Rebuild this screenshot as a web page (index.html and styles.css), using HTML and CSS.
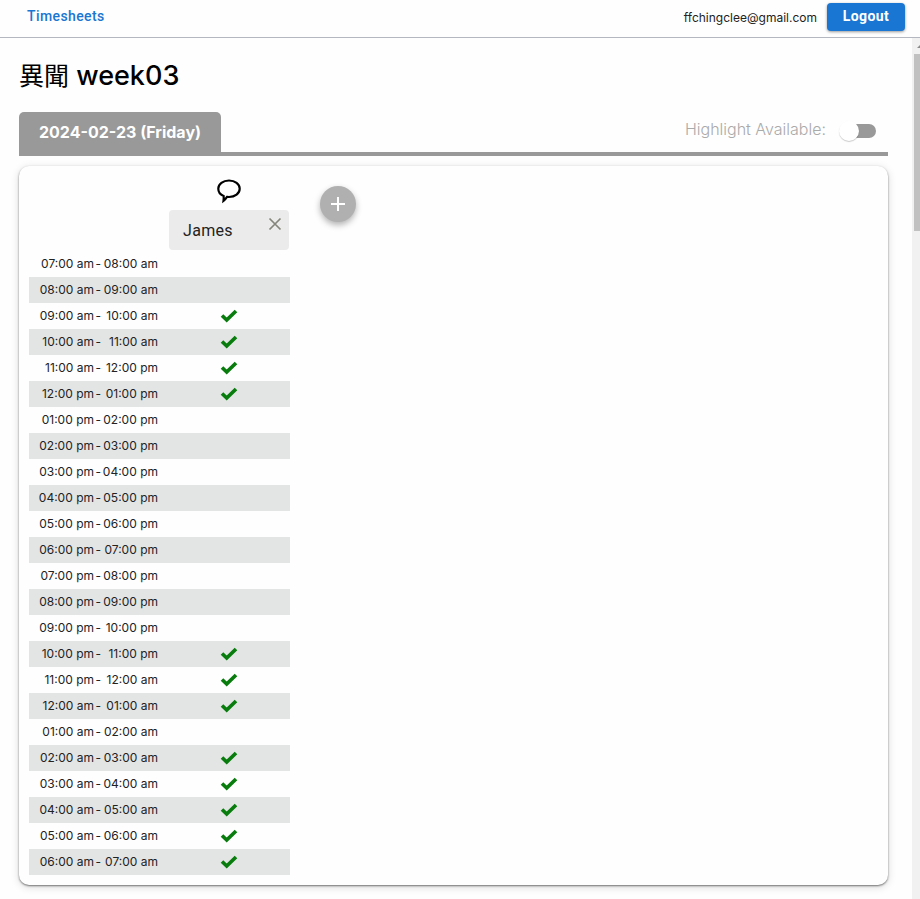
FILE: index.html
```html
<!DOCTYPE html>
<html lang="en">
<head>
<meta charset="utf-8">
<meta name="viewport" content="width=device-width, initial-scale=1">
<title>Timesheets</title>
<link rel="stylesheet" href="styles.css">
</head>
<body>
<svg class="sprite" aria-hidden="true">
  <symbol id="check" viewBox="0 0 18 14"><path d="M2 6.500 6.700 11 16 2" fill="none" stroke="currentColor" stroke-width="3.700"/></symbol>
</svg>
<header class="topbar">
  <nav><a class="nav-link" href="#">Timesheets</a></nav>
  <div class="account">
    <span class="email">ffchingclee@gmail.com</span>
    <button class="logout" type="button">Logout</button>
  </div>
</header>
<div class="viewport">
  <main class="content">
    <h1 class="title"><span class="title-zh" lang="zh-Hant">異聞</span> week03</h1>
    <div class="tabs">
      <button class="tab" type="button">2024-02-23 (Friday)</button>
      <label class="highlight">Highlight Available: <input class="switch" type="checkbox" role="switch"></label>
    </div>
    <section class="card">
      <table class="slots">
        <thead>
          <tr>
            <td></td>
            <th scope="col">
              <button class="comment" type="button" aria-label="Comment">
                <svg width="26" height="26" viewBox="0 0 26 26"><path d="M13 2.500C19 2.500 23.700 6 23.700 10.700S19 19 13 19C12.300 19 11.600 19 11 18.900C10 20.500 8.800 21.800 7.500 22.800C7.800 20.800 7.800 19.300 7.600 17.900C4.400 16.600 2.300 14 2.300 10.700C2.300 6 7 2.500 13 2.500Z" fill="none" stroke="#000" stroke-width="2.200"/></svg>
              </button>
              <div class="person">
                <span>James</span>
                <button class="remove" type="button" aria-label="Remove James">
                  <svg width="14" height="14" viewBox="0 0 14 14"><path d="M1.500 1.500l11 11M12.500 1.500l-11 11" stroke="#85857c" stroke-width="1.700"/></svg>
                </button>
              </div>
            </th>
          </tr>
        </thead>
        <tbody id="rows"></tbody>
      </table>
      <button class="add" type="button" aria-label="Add person">
        <svg width="14" height="14" viewBox="0 0 14 14"><path d="M7 0v14M0 7h14" stroke="#fff" stroke-width="2"/></svg>
      </button>
    </section>
  </main>
  <div class="scrollbar" aria-hidden="true">
    <svg class="arrow" width="8" height="16" viewBox="0 0 8 16"><path d="M5 10 8 7v3z" fill="#8b8b8b"/></svg>
    <div class="thumb"></div>
  </div>
</div>
<script src="script.js"></script>
</body>
</html>
```
FILE: styles.css
```css
* { box-sizing: border-box; }
body {
  margin: 0;
  min-height: 100vh;
  display: flex;
  flex-direction: column;
  background: #fefefe;
  color: #222;
  font-family: Inter, "Noto Sans CJK TC", sans-serif;
}
button {
  border: 0;
  padding: 0;
  background: none;
  font: inherit;
  cursor: pointer;
}
.sprite { position: absolute; width: 0; height: 0; }
.topbar {
  height: 38px;
  display: flex;
  align-items: flex-start;
  justify-content: space-between;
  padding: 3px 15px 0 27px;
  border-bottom: 1px solid #b4b7c0;
}
.nav-link {
  color: #1976d2;
  font: 500 14px/26px Roboto, sans-serif;
  letter-spacing: 0.4px;
  text-decoration: none;
}
.account { display: flex; align-items: flex-start; gap: 10px; }
.email { font-size: 12px; line-height: 30px; }
.logout {
  width: 78px;
  height: 28px;
  padding-bottom: 2px;
  border-radius: 4px;
  background: #1976d2;
  color: #fff;
  font: 700 14px/26px Roboto, sans-serif;
  letter-spacing: 0.4px;
  box-shadow: 0 1px 3px rgba(0, 0, 0, 0.4);
}
.viewport { flex: 1; display: flex; }
.content { flex: 1; padding: 20px 24px 14px 19px; }
.title {
  margin: 0;
  color: #000;
  font-size: 27px;
  font-weight: 500;
  line-height: 36px;
}
.title-zh {
  font-family: "Noto Sans CJK TC", sans-serif;
  font-size: 25px;
  font-weight: 400;
  line-height: 1;
}
.tabs {
  display: flex;
  align-items: flex-start;
  justify-content: space-between;
  margin-top: 18px;
  border-bottom: 4px solid #999;
}
.tab {
  height: 40px;
  padding: 0 20px;
  border-radius: 5px 5px 0 0;
  background: #999;
  color: #fff;
  font-size: 16px;
  font-weight: 700;
}
.highlight {
  display: flex;
  align-items: flex-start;
  gap: 16px;
  margin-right: 12px;
  color: #aaa;
  font-size: 16px;
  font-weight: 300;
  line-height: 34px;
}
.switch {
  appearance: none;
  position: relative;
  width: 34px;
  height: 14px;
  margin: 12px 0 0;
  border-radius: 7px;
  background: #999;
}
.switch::before {
  content: "";
  position: absolute;
  top: -3px;
  left: -3px;
  width: 20px;
  height: 20px;
  border-radius: 50%;
  background: #fff;
  box-shadow: 0 1px 1px rgba(0, 0, 0, 0.2);
}
.card {
  display: flex;
  align-items: flex-start;
  gap: 30px;
  margin-top: 10px;
  padding: 10px;
  border-radius: 10px;
  background: #fefefe;
  box-shadow: 0 1px 2px rgba(0, 0, 0, 0.5), 0 2px 8px rgba(0, 0, 0, 0.15);
}
.slots { border-collapse: collapse; }
.slots td, .slots th { padding: 0; font-weight: 400; }
.comment { display: block; height: 26px; margin: 2px 48px 6px 47px; }
.comment svg { display: block; }
.person {
  display: flex;
  justify-content: space-between;
  width: 120px;
  height: 40px;
  margin: 0 1px 1px 0;
  padding: 0 7px 0 14px;
  border-radius: 4px;
  background: #ebebeb;
  font: 400 16px/41px Roboto, sans-serif;
  letter-spacing: 0.3px;
}
.remove { height: 14px; margin-top: 7px; line-height: 0; }
.slots tbody tr { height: 26px; }
.slots tbody tr:nth-child(even) { background: #e3e5e4; }
.range {
  display: grid;
  grid-template-columns: 65px 7px 57px;
  width: 140px;
  font-size: 12px;
  line-height: 26px;
  text-align: right;
}
.slots .mark { padding-right: 2px; color: #087d0d; text-align: center; line-height: 0; }
.add {
  display: flex;
  align-items: center;
  justify-content: center;
  width: 36px;
  height: 36px;
  margin-top: 10px;
  border-radius: 50%;
  background: #b0b0b0;
  box-shadow: 0 3px 6px rgba(0, 0, 0, 0.3);
}
.scrollbar {
  width: 8px;
  background: #f1f1f1;
}
.arrow { display: block; }
.thumb { height: 177px; margin-left: 2px; background: #c1c1c1; }
```
FILE: script.js
```js
const available = new Set([9, 10, 11, 12, 22, 23, 24, 26, 27, 28, 29, 30]);

function label(hour) {
  const h = hour % 24;
  return String(h % 12 || 12).padStart(2, "0") + ":00 " + (h < 12 ? "am" : "pm");
}

const rows = [];
for (let hour = 7; hour < 31; hour++) {
  const mark = available.has(hour)
    ? '<svg width="18" height="14" role="img" aria-label="Available"><use href="#check"/></svg>'
    : "";
  rows.push(`<tr><td><div class="range"><span>${label(hour)}</span><span>-</span><span>${label(hour + 1)}</span></div></td><td class="mark">${mark}</td></tr>`);
}
document.getElementById("rows").innerHTML = rows.join("");
```
